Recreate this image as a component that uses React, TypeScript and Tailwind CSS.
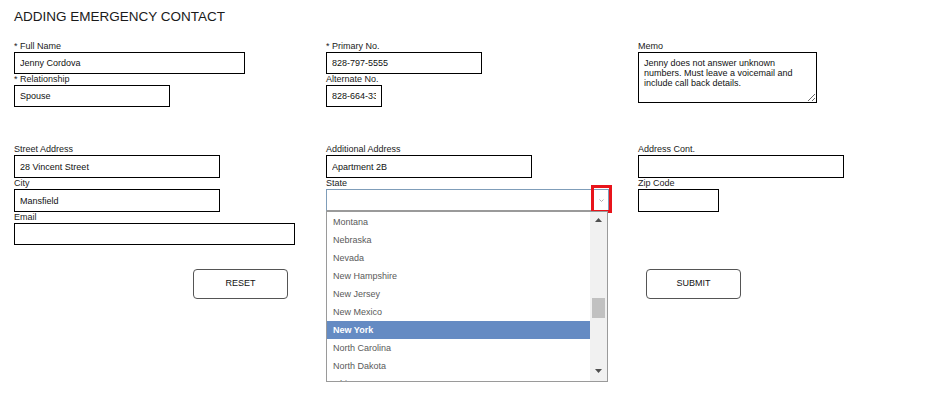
import React from "react";

const font = { fontFamily: '"Liberation Sans", Arial, sans-serif' };

const states = [
  "Montana",
  "Nebraska",
  "Nevada",
  "New Hampshire",
  "New Jersey",
  "New Mexico",
  "New York",
  "North Carolina",
  "North Dakota",
  "Ohio",
];

function Label({ children }: { children: React.ReactNode }) {
  return <div className="h-[11px] text-[9px] leading-[11px] text-[#1a1a1a] whitespace-nowrap">{children}</div>;
}

function Field({ w, h, value }: { w: string; h: string; value?: string }) {
  return (
    <input
      defaultValue={value}
      className={`${w} ${h} block border border-black bg-white px-[5px] text-[9px] text-[#111] outline-none`}
      style={font}
    />
  );
}

function StateSelect() {
  return (
    <div className="relative h-[22px] w-[283px]">
      <div className="flex h-full w-full border border-[#7f9db9] border-b-[#9a9a9a] bg-white">
        <div className="flex-1" />
        <div className="flex w-[15px] items-center justify-center border-l border-[#7f9db9]">
          <svg width="5" height="3" viewBox="0 0 5 3">
            <path d="M0.5 0.5 L2.5 2.5 L4.5 0.5" fill="none" stroke="#b0b0b0" strokeWidth="1" />
          </svg>
        </div>
      </div>
      <div className="pointer-events-none absolute left-[265px] top-[-4px] h-[28px] w-[21px] border-[3px] border-[#e8141b]" />

      <div className="absolute left-0 top-[22px] z-10 h-[171px] w-[282px] overflow-hidden border border-[#9a9a9a] bg-white">
        <div className="pr-[17px] pt-px">
          {states.map((s) => (
            <div
              key={s}
              className={
                s === "New York"
                  ? "h-[18px] bg-[#658bc3] pl-[6px] text-[9px] font-bold leading-[18px] text-white"
                  : "h-[18px] pl-[6px] text-[9px] leading-[18px] text-[#5a5a5a]"
              }
            >
              {s}
            </div>
          ))}
        </div>
        <div className="absolute bottom-0 right-0 top-0 w-[17px] bg-[#f1f1f1]">
          <svg className="absolute left-[5px] top-[6px]" width="7" height="4" viewBox="0 0 7 4">
            <path d="M0 4 L3.5 0 L7 4 Z" fill="#505050" />
          </svg>
          <div className="absolute left-[2px] top-[86px] h-[20px] w-[13px] bg-[#c1c1c1]" />
          <svg className="absolute bottom-[8px] left-[5px]" width="7" height="4" viewBox="0 0 7 4">
            <path d="M0 0 L7 0 L3.5 4 Z" fill="#505050" />
          </svg>
        </div>
      </div>
    </div>
  );
}

export default function App() {
  return (
    <div className="relative h-[394px] w-[936px] overflow-hidden bg-white px-[14px]" style={font}>
      <h1 className="pt-[9px] text-[13.5px] font-normal leading-[16px] text-[#1a1a1a]">ADDING EMERGENCY CONTACT</h1>

      <div className="mt-[16px] grid grid-cols-[312px_312px_1fr]">
        <div>
          <Label>* Full Name</Label>
          <Field w="w-[231px]" h="h-[22px]" value="Jenny Cordova" />
          <Label>* Relationship</Label>
          <Field w="w-[156px]" h="h-[22px]" value="Spouse" />
        </div>
        <div>
          <Label>* Primary No.</Label>
          <Field w="w-[156px]" h="h-[22px]" value="828-797-5555" />
          <Label>Alternate No.</Label>
          <Field w="w-[56px]" h="h-[22px]" value="828-664-3333" />
        </div>
        <div>
          <Label>Memo</Label>
          <textarea
            defaultValue="Jenny does not answer unknown numbers. Must leave a voicemail and include call back details."
            className="block h-[51px] w-[179px] border border-black px-[5px] pt-[5px] text-[9px] leading-[10px] text-[#111] outline-none"
            style={font}
          />
        </div>
      </div>

      <div className="mt-[37px] grid grid-cols-[312px_312px_1fr]">
        <div>
          <Label>Street Address</Label>
          <Field w="w-[206px]" h="h-[23px]" value="28 Vincent Street" />
          <Label>City</Label>
          <Field w="w-[206px]" h="h-[23px]" value="Mansfield" />
          <Label>Email</Label>
          <Field w="w-[281px]" h="h-[22px]" />
        </div>
        <div>
          <Label>Additional Address</Label>
          <Field w="w-[206px]" h="h-[23px]" value="Apartment 2B" />
          <Label>State</Label>
          <StateSelect />
        </div>
        <div>
          <Label>Address Cont.</Label>
          <Field w="w-[206px]" h="h-[23px]" />
          <Label>Zip Code</Label>
          <Field w="w-[81px]" h="h-[23px]" />
        </div>
      </div>

      <div className="mt-[24px] flex pl-[179px]">
        <button className="h-[30px] w-[95px] rounded-[4px] border border-[#555] bg-white text-[9px] text-[#111]">
          RESET
        </button>
        <button className="ml-[358px] h-[30px] w-[95px] rounded-[4px] border border-[#555] bg-white text-[9px] text-[#111]">
          SUBMIT
        </button>
      </div>
    </div>
  );
}
